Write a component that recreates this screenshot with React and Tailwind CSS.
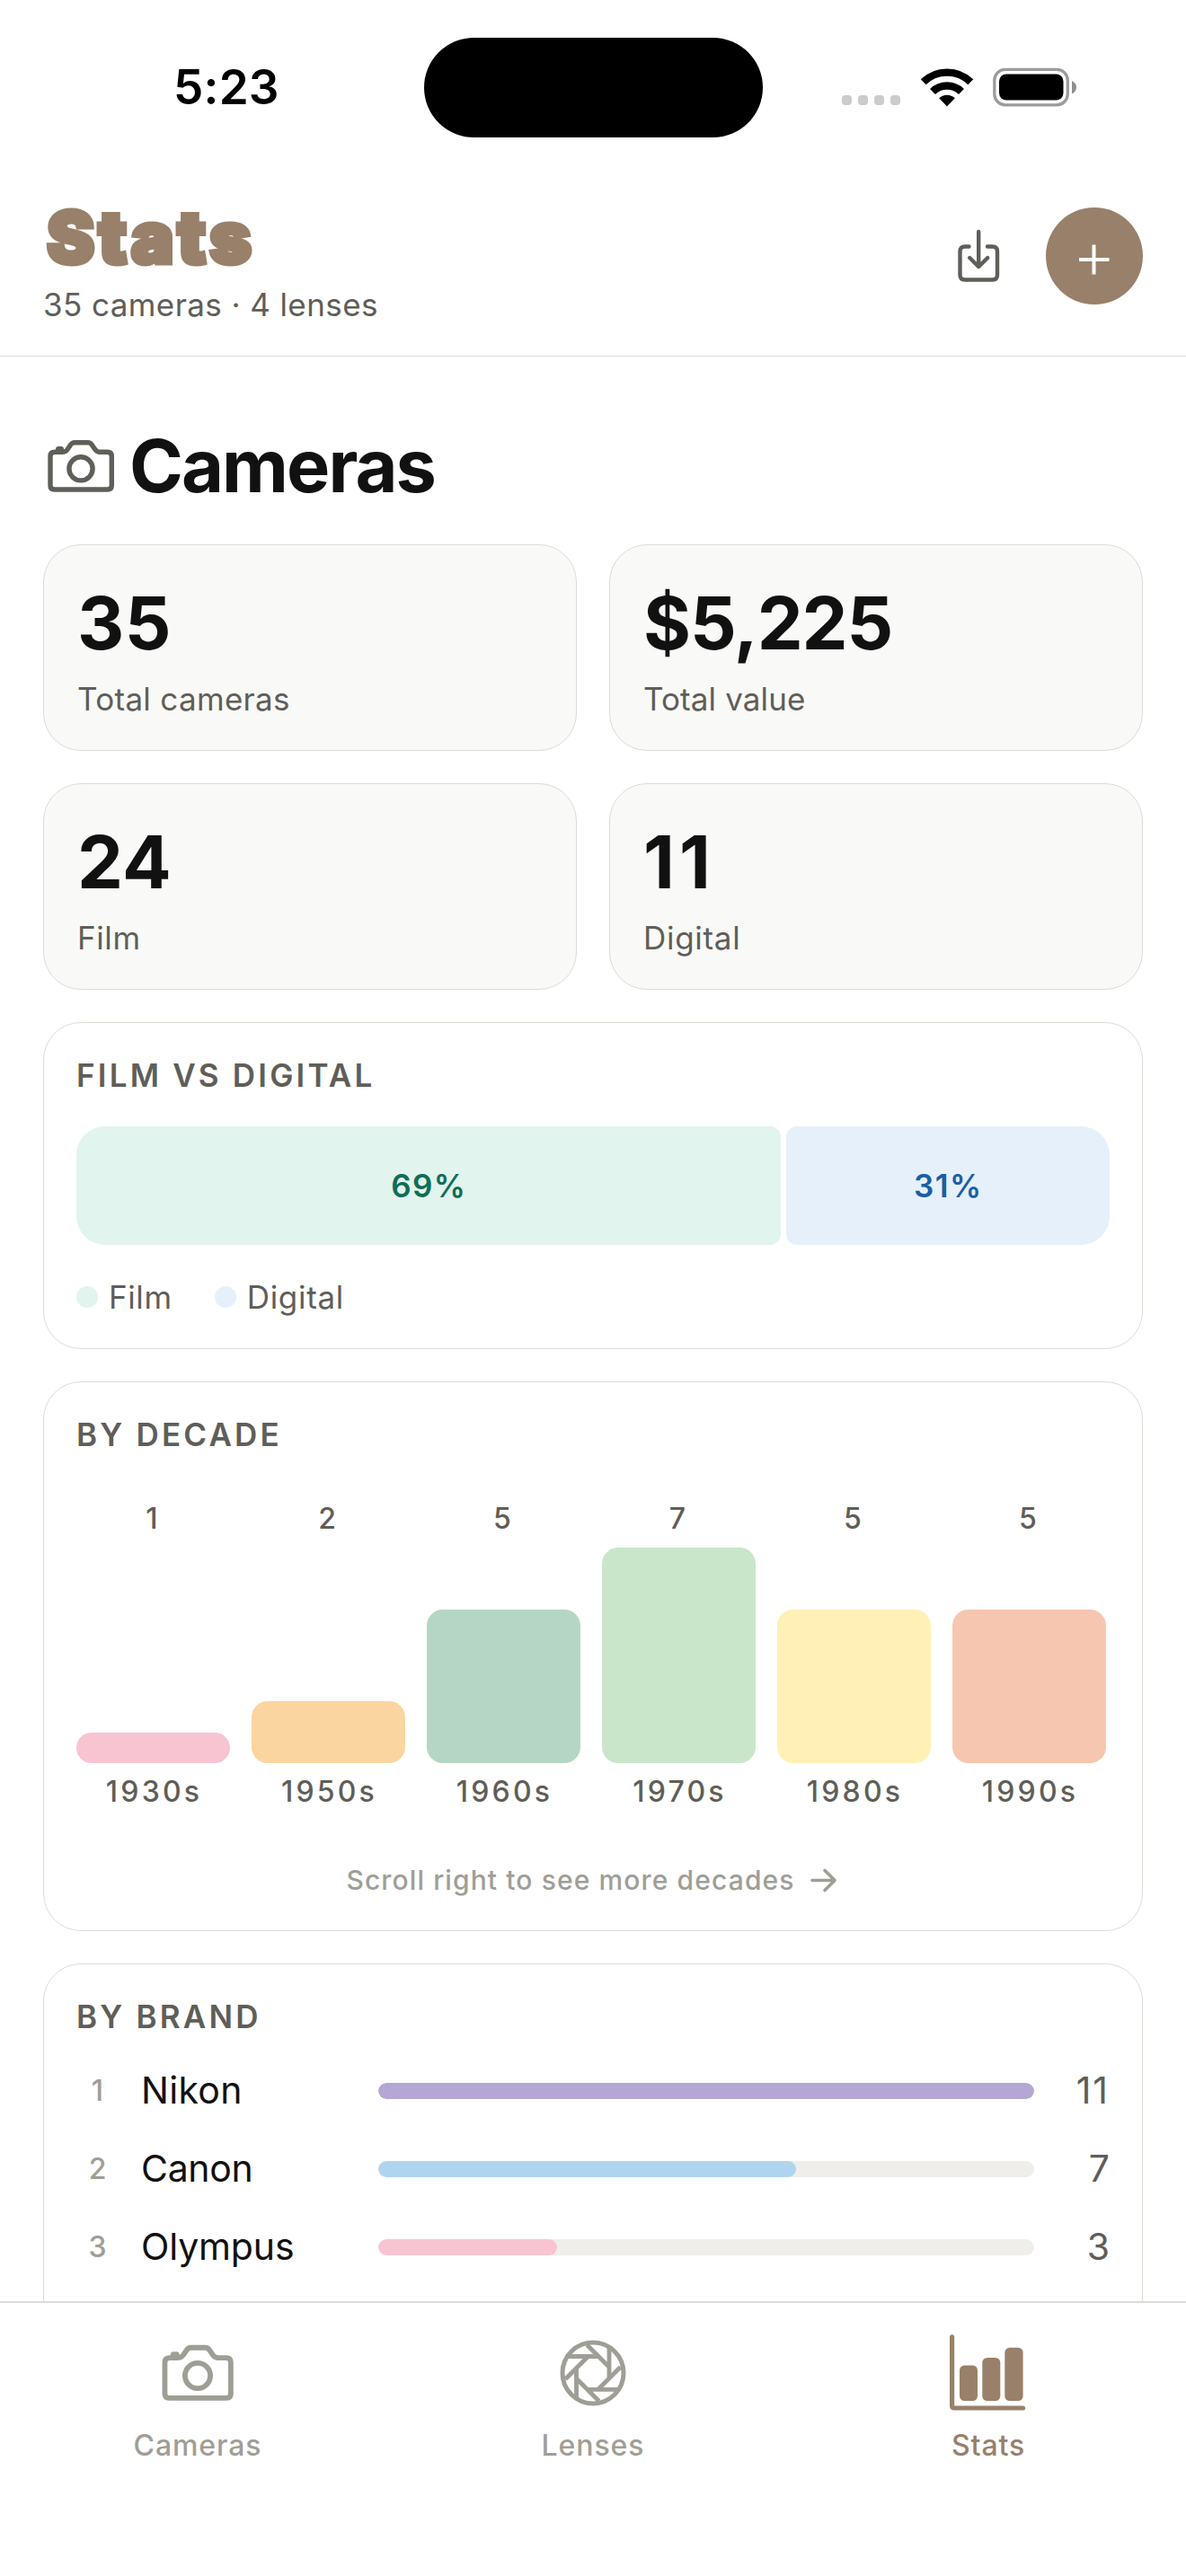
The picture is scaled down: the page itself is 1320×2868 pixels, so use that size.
import React from "react";

const DECADES = [
  { label: "1930s", count: 1, height: 34, color: "bg-[#f8c4d2]" },
  { label: "1950s", count: 2, height: 69, color: "bg-[#fad5a0]" },
  { label: "1960s", count: 5, height: 171, color: "bg-[#b6d6c5]" },
  { label: "1970s", count: 7, height: 240, color: "bg-[#c9e6cb]" },
  { label: "1980s", count: 5, height: 171, color: "bg-[#fff0b5]" },
  { label: "1990s", count: 5, height: 171, color: "bg-[#f6c6b0]" },
];

const BRANDS = [
  { name: "Nikon", count: 11, color: "bg-[#b4a7d3]", tracking: "tracking-[0.3px]", countTracking: "tracking-[2px]" },
  { name: "Canon", count: 7, color: "bg-[#aed5f0]", tracking: "tracking-[-0.3px]", countTracking: "" },
  { name: "Olympus", count: 3, color: "bg-[#f8c4d2]", tracking: "tracking-[-0.15px]", countTracking: "" },
];

function CameraIcon({ className }) {
  return (
    <svg viewBox="10 9 80 80" fill="none" stroke="currentColor" strokeWidth="5.4" strokeLinejoin="round" className={className}>
      <path d="M21 33.3H29Q33 33.3 35 30.5L38.5 25.3Q40.3 22.7 43 22.7H58Q60.5 22.7 62.3 25.3L66 30.7Q68 33.3 71 33.3H79.5Q84.3 33.3 84.3 38V70.5Q84.3 75 79.5 75H20.5Q16 75 16 70.5V38Q16 33.3 21 33.3Z" />
      <circle cx="50" cy="51.8" r="13.1" />
      <path d="M22 33V30Q22 27 25 27H28Q31 27 31 30V33Z" fill="currentColor" stroke="none" />
    </svg>
  );
}

function ApertureIcon({ className }) {
  return (
    <svg viewBox="13 21 270 270" fill="none" stroke="currentColor" strokeWidth="15" className={className}>
      <circle cx="148" cy="156" r="102" />
      <path
        strokeWidth="14.5"
        d="M62 100.500H167M128 62L203 137M202 72V176M240 136L162 214M234 211H129M168 250L93 175M92.500 240V136M56 176L134 98"
      />
    </svg>
  );
}

function ChartIcon({ className }) {
  return (
    <svg viewBox="0 0 90 90" fill="currentColor" className={className}>
      <path d="M4.600 4.800V81.500Q4.600 84 7.200 84H83.500" fill="none" stroke="currentColor" strokeWidth="5.200" strokeLinecap="round" />
      <rect x="13" y="36.500" width="20" height="39.500" rx="5.500" />
      <rect x="38.300" y="28" width="20" height="48" rx="5.500" />
      <rect x="63.300" y="16.700" width="20.300" height="59.300" rx="5.500" />
    </svg>
  );
}

function StatusBar() {
  return (
    <div className="flex h-[174px] shrink-0 items-start pt-[42px] text-black">
      <div className="flex h-[112px] w-[472px] items-center pl-[193px] text-[53px] font-semibold tracking-[0.2px]">5:23</div>
      <div className="h-[111px] w-[377px] rounded-full bg-black" />
      <div className="flex h-[109px] items-center pl-[88px]">
        <div className="mt-[30px] flex gap-[7px]">
          {[0, 1, 2, 3].map((i) => (
            <span key={i} className="h-[11px] w-[11px] rounded-[4px] bg-[#cbcbcb]" />
          ))}
        </div>
        <svg viewBox="0 0 60 44" className="ml-[22px] h-[44px] w-[60px]" fill="none" stroke="black">
          <path d="M3.700 16.300A37.800 37.800 0 0 1 56.300 16.300" strokeWidth="8.400" />
          <path d="M14 27A23 23 0 0 1 46 27" strokeWidth="8.400" />
          <path d="M30 43.500L21.200 34.300A12.700 12.700 0 0 1 38.800 34.300Z" fill="black" stroke="none" />
        </svg>
        <svg viewBox="0 0 94 44" className="ml-[21px] h-[44px] w-[94px]">
          <rect x="1.800" y="2.300" width="81.500" height="39.500" rx="12" fill="none" stroke="#9b9b9b" strokeWidth="3.300" />
          <rect x="7" y="7.500" width="71.500" height="29" rx="8" fill="black" />
          <path d="M88 15V29.500Q93 27 93 22.250Q93 17.500 88 15Z" fill="#8e8e8e" />
        </svg>
      </div>
    </div>
  );
}

function Header() {
  return (
    <header className="flex h-[223px] shrink-0 items-start justify-between border-b border-[#dcdcd6] px-[48px] pt-[48px]">
      <div>
        <h1 className="ml-[4px] text-[80px] leading-[84px] font-black tracking-[4px] text-[#98806a] [-webkit-text-stroke:5px_#98806a] [paint-order:stroke_fill] [stroke-linejoin:round]">
          Stats
        </h1>
        <p className="mt-[11px] text-[35px] leading-[44px] tracking-[0.41px] text-[#5f5e58]">35 cameras · 4 lenses</p>
      </div>
      <div className="mt-[9px] flex items-center gap-[44px]">
        <svg viewBox="0 0 60 70" className="h-[70px] w-[60px]" fill="none" stroke="#5f5e58" strokeWidth="4.400" strokeLinecap="round" strokeLinejoin="round">
          <path d="M18.500 24.500H14Q8.500 24.500 8.500 30V56Q8.500 61.500 14 61.500H44.500Q50 61.500 50 56V30Q50 24.500 44.500 24.500H39M29.200 8V46.500M19.200 37L29.200 47L39.200 37" />
        </svg>
        <button className="flex h-[108px] w-[108px] items-center justify-center rounded-full bg-[#98806a]">
          <svg viewBox="0 0 36 36" className="mt-[8px] h-[36px] w-[36px]" stroke="white" strokeWidth="4">
            <path d="M1 18H34.500M17.500 1.500V34.500" />
          </svg>
        </button>
      </div>
    </header>
  );
}

function StatCard({ value, label, valueTracking, labelTracking }) {
  return (
    <div className="h-[230px] rounded-[42px] border border-[#dcdcd6] bg-[#f9f9f7] px-[37px] pt-[38px]">
      <div className={`text-[81px] leading-[98px] font-bold text-[#111111] ${valueTracking}`}>{value}</div>
      <div className={`mt-[13px] text-[35px] leading-[44px] text-[#5f5e58] ${labelTracking}`}>{label}</div>
    </div>
  );
}

function Panel({ title, className, children }) {
  return (
    <section className={`mt-[36px] rounded-[42px] border border-[#dcdcd6] px-[36px] pt-[36px] ${className}`}>
      <h3 className="text-[35px] leading-[44px] font-semibold tracking-[3.2px] text-[#5f5e58]">{title}</h3>
      {children}
    </section>
  );
}

function Legend({ color, children, tracking }) {
  return (
    <div className="flex items-center gap-[12px]">
      <span className={`h-[24px] w-[24px] rounded-full ${color}`} />
      <span className={`text-[35px] leading-[44px] text-[#5f5e58] ${tracking}`}>{children}</span>
    </div>
  );
}

function Tab({ icon, label, color }) {
  return (
    <div className={`flex flex-1 flex-col items-center ${color}`}>
      <div className="flex h-[90px] items-center">{icon}</div>
      <span className="mt-[16px] text-[32px] leading-[40px] font-medium tracking-[0.9px]">{label}</span>
    </div>
  );
}

export default function App() {
  return (
    <div className="flex h-[2868px] w-[1320px] flex-col overflow-hidden bg-white font-['Inter',sans-serif]">
      <StatusBar />
      <Header />

      <main className="h-[2165px] shrink-0 overflow-hidden px-[48px] pt-[73px]">
        <div className="flex items-center text-[#5f5e58]">
          <CameraIcon className="ml-[2px] h-[80px] w-[80px]" />
          <h2 className="ml-[14px] text-[81px] leading-[98px] font-bold tracking-[-1.92px] text-[#111111]">Cameras</h2>
        </div>

        <div className="mt-[38px] grid grid-cols-2 gap-[36px]">
          <StatCard value="35" label="Total cameras" valueTracking="tracking-[0.5px]" labelTracking="tracking-[0.31px]" />
          <StatCard value="$5,225" label="Total value" valueTracking="tracking-[-1.1px]" labelTracking="tracking-[0.12px]" />
          <StatCard value="24" label="Film" valueTracking="tracking-[0.25px]" labelTracking="tracking-[0.6px]" />
          <StatCard value="11" label="Digital" valueTracking="tracking-[5px]" labelTracking="tracking-[0.7px]" />
        </div>

        <Panel title="FILM VS DIGITAL" className="h-[364px]">
          <div className="mt-[35px] flex h-[132px] gap-[6px] text-[35px] font-semibold">
            <div className="flex flex-[24_1_0%] items-center justify-center rounded-l-[32px] rounded-r-[12px] bg-[#e1f4ed] tracking-[1.4px] text-[#0f6e56]">69%</div>
            <div className="flex flex-[11_1_0%] items-center justify-center rounded-l-[12px] rounded-r-[32px] bg-[#e6f0fb] tracking-[1.4px] text-[#185fa5]">31%</div>
          </div>
          <div className="mt-[36px] flex gap-[47px]">
            <Legend color="bg-[#e1f4ed]" tracking="tracking-[0.6px]">Film</Legend>
            <Legend color="bg-[#e6f0fb]" tracking="tracking-[0.7px]">Digital</Legend>
          </div>
        </Panel>

        <Panel title="BY DECADE" className="h-[612px]">
          <div className="mt-[52px] flex h-[344px] items-stretch gap-[24px] text-[32px] leading-[40px] font-medium text-[#5f5e58]">
            {DECADES.map((d) => (
              <div key={d.label} className="flex w-[171px] flex-col text-center">
                <span className="pr-[3px]">{d.count}</span>
                <div className={`mt-auto w-full shrink-0 rounded-[18px] ${d.color}`} style={{ height: d.height }} />
                <span className="mt-[12px] pl-[2px] tracking-[3.2px]">{d.label}</span>
              </div>
            ))}
          </div>
          <div className="mt-[60px] flex items-center justify-center gap-[14px] text-[#9f9e96]">
            <span className="text-[30px] leading-[36px] font-medium tracking-[1.12px]">Scroll right to see more decades</span>
            <svg viewBox="0 0 36 36" className="h-[36px] w-[36px]" fill="none" stroke="currentColor" strokeWidth="3.600" strokeLinecap="round" strokeLinejoin="round">
              <path d="M5 18.500H30M19 7.500L30 18.500L19 29.500" />
            </svg>
          </div>
        </Panel>

        <Panel title="BY BRAND" className="h-[460px]">
          <div className="mt-[35px] flex flex-col gap-[36px]">
            {BRANDS.map((b, i) => (
              <div key={b.name} className="flex h-[51px] items-center">
                <span className="w-[47px] text-center text-[32px] font-medium text-[#9f9e96]">{i + 1}</span>
                <span className={`ml-[25px] w-[240px] text-[41px] text-[#111111] ${b.tracking}`}>{b.name}</span>
                <div className="ml-[24px] h-[18px] w-[730px] overflow-hidden rounded-full bg-[#efeeea]">
                  <div className={`h-full rounded-full ${b.color}`} style={{ width: `${(b.count / 11) * 100}%` }} />
                </div>
                <span className={`flex-1 text-right text-[41px] text-[#5f5e58] ${b.countTracking}`}>{b.count}</span>
              </div>
            ))}
          </div>
        </Panel>
      </main>

      <nav className="flex h-[306px] shrink-0 border-t-2 border-[#dcdcd6] bg-white pt-[33px]">
        <Tab icon={<CameraIcon className="h-[86px] w-[86px]" />} label="Cameras" color="text-[#9f9e96]" />
        <Tab icon={<ApertureIcon className="h-[90px] w-[90px]" />} label="Lenses" color="text-[#9f9e96]" />
        <Tab icon={<ChartIcon className="h-[90px] w-[90px]" />} label="Stats" color="text-[#98806a]" />
      </nav>
    </div>
  );
}
